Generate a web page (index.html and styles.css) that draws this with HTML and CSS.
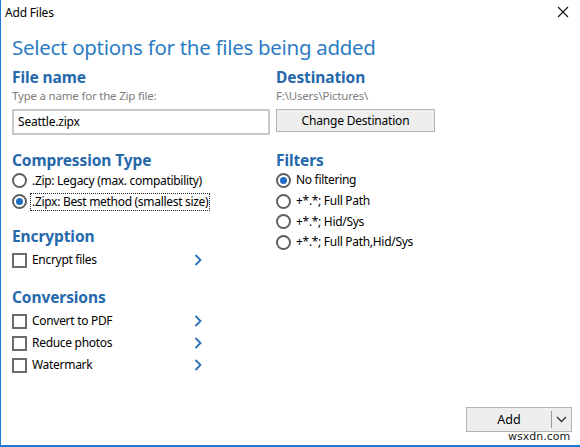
FILE: index.html
```html
<!DOCTYPE html>
<html lang="en">
<head>
<meta charset="utf-8">
<title>Add Files</title>
<link rel="stylesheet" href="styles.css">
</head>
<body>
<div class="window">
  <div class="titlebar">
    <span class="title">Add Files</span>
    <svg class="close" width="12" height="12" viewBox="0 0 12 12"><path d="M1 1L11 11M11 1L1 11" stroke="#111" stroke-width="1.1" fill="none"/></svg>
  </div>
  <div class="content">
    <h1 class="heading">Select options for the files being added</h1>

    <div class="row">
      <div class="col left">
        <h2 class="section">File name</h2>
        <div class="hint">Type a name for the Zip file:</div>
        <div class="textbox">Seattle.zipx</div>
      </div>
      <div class="col right">
        <h2 class="section">Destination</h2>
        <div class="hint">F:\Users\Pictures\</div>
        <div class="btn dest-btn">Change Destination</div>
      </div>
    </div>

    <div class="row group2">
      <div class="col left">
        <h2 class="section">Compression Type</h2>
        <div class="opt"><span class="radio"></span><span class="label">.Zip: Legacy (max. compatibility)</span></div>
        <div class="opt"><span class="radio on"></span><span class="label focus">.Zipx: Best method (smallest size)</span></div>

        <h2 class="section sec-gap">Encryption</h2>
        <div class="opt check"><span class="box"></span><span class="label">Encrypt files</span><svg class="chev" width="8" height="12" viewBox="0 0 8 12"><path d="M1.5 1L6.5 6L1.5 11" stroke="#2a6eb3" stroke-width="1.8" fill="none"/></svg></div>

        <h2 class="section sec-gap2">Conversions</h2>
        <div class="opt check"><span class="box"></span><span class="label">Convert to PDF</span><svg class="chev" width="8" height="12" viewBox="0 0 8 12"><path d="M1.5 1L6.5 6L1.5 11" stroke="#2a6eb3" stroke-width="1.8" fill="none"/></svg></div>
        <div class="opt check"><span class="box"></span><span class="label">Reduce photos</span><svg class="chev" width="8" height="12" viewBox="0 0 8 12"><path d="M1.5 1L6.5 6L1.5 11" stroke="#2a6eb3" stroke-width="1.8" fill="none"/></svg></div>
        <div class="opt check"><span class="box"></span><span class="label">Watermark</span><svg class="chev" width="8" height="12" viewBox="0 0 8 12"><path d="M1.5 1L6.5 6L1.5 11" stroke="#2a6eb3" stroke-width="1.8" fill="none"/></svg></div>
      </div>
      <div class="col right">
        <h2 class="section">Filters</h2>
        <div class="opt tight"><span class="radio on"></span><span class="label">No filtering</span></div>
        <div class="opt tight"><span class="radio"></span><span class="label">+*.*; Full Path</span></div>
        <div class="opt tight"><span class="radio"></span><span class="label">+*.*; Hid/Sys</span></div>
        <div class="opt tight"><span class="radio"></span><span class="label">+*.*; Full Path,Hid/Sys</span></div>
      </div>
    </div>
  </div>

  <div class="footer">
    <div class="split-btn">
      <span class="split-main">Add</span>
      <span class="split-arrow"><svg width="11" height="7" viewBox="0 0 11 7"><path d="M1 1L5.5 5.5L10 1" stroke="#333" stroke-width="1.3" fill="none"/></svg></span>
    </div>
    <span class="mark">wsxdn.com</span>
  </div>
</div>
</body>
</html>
```

FILE: styles.css
```css
html, body {
  margin: 0;
  padding: 0;
  background: #ffffff;
}

body {
  font-family: "Noto Sans", "Open Sans", sans-serif;
  font-size: 12px;
  color: #000;
}

.window {
  width: 580px;
  height: 447px;
  box-sizing: border-box;
  border-left: 1px solid #1c7ad0;
  border-bottom: 2px solid #1c7ad0;
  display: flex;
  flex-direction: column;
  position: relative;
  overflow: hidden;
}

.titlebar {
  height: 24px;
  display: flex;
  align-items: center;
  justify-content: space-between;
  padding: 0 11px 0 4px;
}

.title {
  font-size: 12px;
  letter-spacing: -0.2px;
}

.content {
  padding: 9px 0 0 11px;
  flex: 1;
}

.heading {
  margin: 0;
  font-size: 20.5px;
  font-weight: 400;
  line-height: 28px;
  color: #2d7dc4;
  letter-spacing: -0.3px;
}

.row {
  display: flex;
}

.col.left {
  width: 264px;
}

.col.right {
  flex: 1;
}

.section {
  margin: 6px 0 0;
  font-size: 15.5px;
  font-weight: 700;
  line-height: 20px;
  color: #2568ab;
  letter-spacing: -0.1px;
}

.hint {
  color: #7d7d7d;
  font-size: 11.5px;
  line-height: 18px;
  letter-spacing: -0.2px;
}

.textbox {
  margin-top: 4px;
  width: 258px;
  height: 26px;
  box-sizing: border-box;
  border: 2px solid #c8c8c8;
  padding: 0 4px;
  line-height: 22px;
  letter-spacing: -0.2px;
}

.btn {
  background: #eeeeee;
  border: 1px solid #b4b4b4;
  text-align: center;
  letter-spacing: -0.2px;
}

.dest-btn {
  margin-top: 4px;
  width: 159px;
  height: 23px;
  box-sizing: border-box;
  line-height: 21px;
}

.group2 {
  margin-top: 12px;
}

.group2 .section {
  margin-top: 3px;
}

.opt {
  display: flex;
  align-items: center;
  height: 21px;
  letter-spacing: -0.3px;
  position: relative;
}

.opt.tight {
  height: 20.7px;
}

.opt.check {
  height: 22px;
}

.section + .opt.check {
  margin-top: 3px;
}

.radio {
  width: 15px;
  height: 15px;
  box-sizing: border-box;
  border: 2px solid #606060;
  border-radius: 50%;
  margin-right: 3px;
  flex: none;
  position: relative;
  background: #fff;
}

.radio.on::after {
  content: "";
  position: absolute;
  left: 2px;
  top: 2px;
  width: 7px;
  height: 7px;
  border-radius: 50%;
  background: #1f6ec2;
}

.label {
  padding: 0 1px;
  line-height: 16px;
  border: 1px solid transparent;
}

.label.focus {
  border: 1px dotted #222;
}

.box {
  width: 15px;
  height: 15px;
  box-sizing: border-box;
  border: 2px solid #6b6b6b;
  margin-right: 3px;
  flex: none;
}

.chev {
  position: absolute;
  left: 182px;
  top: 5px;
}

.group2 .sec-gap {
  margin-top: 14px;
}

.group2 .sec-gap2 {
  margin-top: 16px;
}

.footer {
  height: 38px;
  position: relative;
}

.split-btn {
  position: absolute;
  left: 465px;
  top: 0;
  width: 106px;
  height: 25px;
  box-sizing: border-box;
  background: #eeeeee;
  border: 1px solid #b4b4b4;
  display: flex;
}

.split-main {
  flex: 1;
  text-align: center;
  line-height: 23px;
  font-size: 12.5px;
}

.split-arrow {
  width: 19px;
  border-left: 1px solid #9a9a9a;
  margin: 3px 0;
  display: flex;
  align-items: center;
  justify-content: center;
}

.mark {
  position: absolute;
  left: 507px;
  top: 24px;
  font-family: "DejaVu Sans", sans-serif;
  font-size: 11px;
  line-height: 12px;
  color: #222;
}
```
